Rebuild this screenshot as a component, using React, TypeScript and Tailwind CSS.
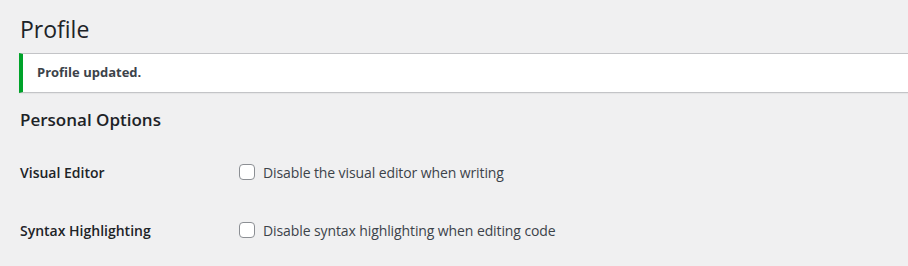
const font = { fontFamily: '"Open Sans", "Noto Sans", sans-serif' };

function Checkbox() {
  return (
    <span className="inline-block w-4 h-4 shrink-0 rounded-[4px] border border-[#8c8f94] bg-white" />
  );
}

const rows = [
  { label: "Visual Editor", text: "Disable the visual editor when writing" },
  { label: "Syntax Highlighting", text: "Disable syntax highlighting when editing code" },
];

export default function App() {
  return (
    <div className="min-h-[266px] bg-[#f0f0f1] pl-[19px] text-[#1d2327] overflow-hidden" style={font}>
      <h1 className="ml-px pt-[14px] pb-[9px] text-[23px] leading-[30px] font-normal">Profile</h1>
      <div className="h-[40px] flex items-center border border-l-4 border-[#c3c4c7] border-l-[#00a32a] bg-white pl-[14px] -mr-4 shadow-[0_1px_1px_rgba(0,0,0,0.04)]">
        <p className="text-[13px] font-bold text-[#3c434a]">Profile updated.</p>
      </div>
      <h2 className="ml-px mt-[16px] text-[17px] leading-[22px] font-semibold">Personal Options</h2>
      <div className="mt-[12px]">
        {rows.map((r) => (
          <div key={r.label} className="flex items-center h-[58px]">
            <div className="w-[220px] pl-px text-[14px] font-semibold">{r.label}</div>
            <label className="flex items-center gap-2 text-[14px] text-[#3c434a] tracking-[-0.1px]">
              <Checkbox />
              <span>{r.text}</span>
            </label>
          </div>
        ))}
      </div>
    </div>
  );
}
